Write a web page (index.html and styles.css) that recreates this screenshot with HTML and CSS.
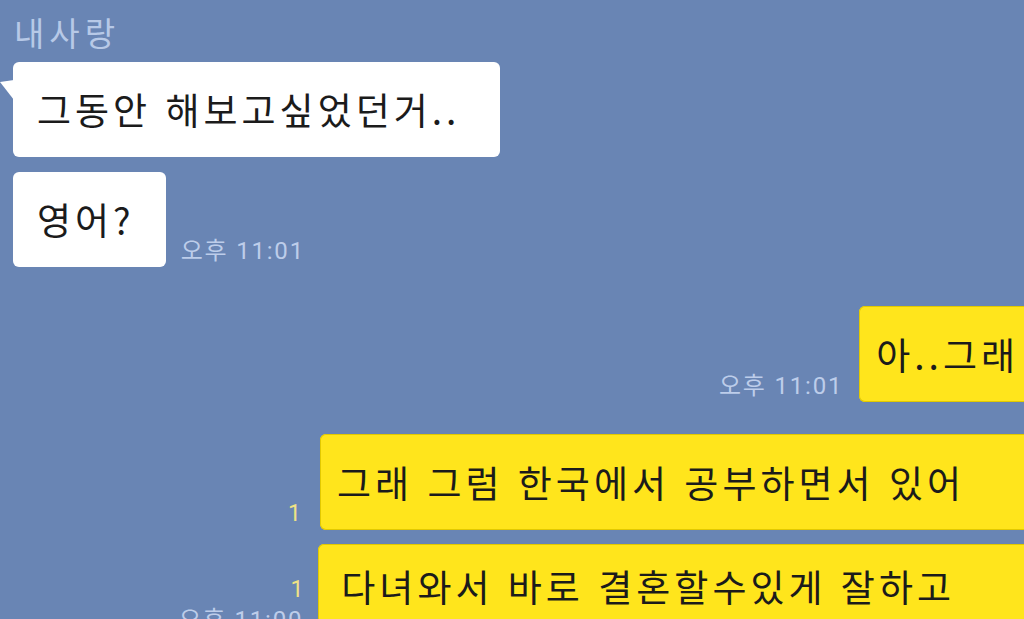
FILE: index.html
```html
<!DOCTYPE html>
<html lang="ko">
<head>
  <meta charset="UTF-8">
  <meta name="viewport" content="width=device-width, initial-scale=1.0">
  <title>내사랑</title>
  <link rel="stylesheet" href="styles.css">
</head>
<body>
  <div class="chat">
    <div class="sender">내사랑</div>

    <div class="row left first">
      <div class="bubble white tail">그동안 해보고싶었던거..</div>
    </div>
    <div class="row left second">
      <div class="bubble white short">영어?</div>
      <div class="meta"><span class="time">오후 11:01</span></div>
    </div>

    <div class="row right r1">
      <div class="meta"><span class="time">오후 11:01</span></div>
      <div class="bubble yellow">아..그래</div>
    </div>
    <div class="row right r2">
      <div class="meta"><span class="unread">1</span></div>
      <div class="bubble yellow">그래 그럼 한국에서 공부하면서 있어</div>
    </div>
    <div class="row right r3">
      <div class="meta"><span class="unread">1</span><span class="time">오후 11:00</span></div>
      <div class="bubble yellow">다녀와서 바로 결혼할수있게 잘하고</div>
    </div>
  </div>
</body>
</html>
```

FILE: styles.css
```css
body {
  margin: 0;
  height: 619px;
  overflow: hidden;
  background-color: #6985b4;
  font-family: "Noto Sans CJK KR", "Noto Sans", sans-serif;
  color: #1b1b1b;
}
.chat {
  display: flex;
  flex-direction: column;
}
.sender {
  margin: 12px 0 0 14px;
  font-size: 33px;
  line-height: 40px;
  letter-spacing: 5px;
  color: #b7c9e7;
}
.row {
  display: flex;
  align-items: flex-end;
}
.row.left {
  padding-left: 13px;
  gap: 15px;
}
.row.right {
  justify-content: flex-end;
  margin-right: -60px;
  gap: 16px;
}
.first { margin-top: 10px; }
.second { margin-top: 15px; }
.r1 { margin-top: 39px; }
.r2 { margin-top: 32px; gap: 19px !important; }
.r3 { margin-top: 14px; gap: 15px !important; }
.bubble {
  position: relative;
  height: 95px;
  display: flex;
  align-items: center;
  font-size: 37px;
  line-height: 1;
  letter-spacing: 4px;
  border-radius: 6px;
  white-space: nowrap;
}
.bubble.white {
  background-color: #ffffff;
  padding: 0 40px 0 24px;
}
.bubble.short {
  padding-right: 31px;
}
.bubble.yellow {
  background-color: #ffe51c;
  box-shadow: inset 0 0 0 1px #e2c900;
  padding: 0 129px 0 17px;
  height: 96px;
}
.r1 .bubble.yellow {
  padding-right: 65px;
}
.r2 .bubble.yellow {
  padding-right: 119px;
}
.r3 .bubble {
  height: 110px;
  align-items: flex-start;
  padding-top: 24px;
  padding-left: 23px;
  box-sizing: border-box;
}
.tail::before {
  content: "";
  position: absolute;
  left: -13px;
  top: 18px;
  width: 14px;
  height: 20px;
  background-color: #ffffff;
  clip-path: polygon(0 2px, 100% 0, 100% 100%);
}
.meta {
  display: flex;
  flex-direction: column;
  align-items: flex-end;
  padding-bottom: 3px;
  font-family: Roboto, "Noto Sans CJK KR", sans-serif;
}
.time {
  font-size: 24px;
  line-height: 26px;
  letter-spacing: 1.8px;
  color: #bdcdea;
}
.unread {
  font-size: 23px;
  line-height: 26px;
  color: #efe285;
}
.r3 .meta {
  align-self: flex-start;
  margin-top: 33px;
  padding-bottom: 0;
}
.r3 .unread { margin-bottom: 4px; }
```
